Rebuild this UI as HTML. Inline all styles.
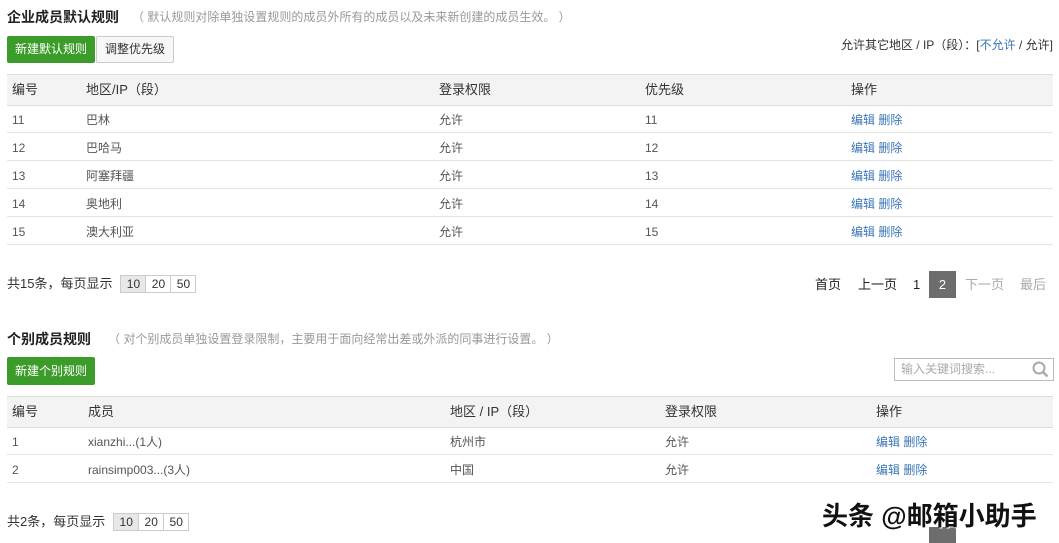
<!DOCTYPE html><html><head><meta charset="utf-8"><style>
body{margin:0;width:1059px;height:543px;overflow:hidden;background:#fff;font-family:"Liberation Sans","Noto Sans CJK SC",sans-serif;color:#333;position:relative}
.a{position:absolute;white-space:nowrap}
.t{font-size:14px;font-weight:bold;color:#222}
.d{font-size:12px;color:#999}
.btn{position:absolute;font-size:12px;line-height:26px;padding:0 8px;border-radius:2px}
.g{background:#3c9c2a;color:#fff}
.w{background:#f7f7f7;border:1px solid #ccc;color:#333;line-height:25px}
.tbl{position:absolute;left:7px;width:1046px}
.h{position:absolute;left:0;width:1046px;background:#f3f3f3;border-top:1px solid #ddd;border-bottom:1px solid #ddd;font-size:13px;color:#333}
.r{position:absolute;left:0;width:1046px;border-bottom:1px solid #e4e4e4;font-size:12px;color:#555}
.c{position:absolute;top:2px}
.h .c{top:0}
.lk{color:#3a76b6}
.pg{font-size:13px;line-height:27px}
.ps{margin-left:8px}
.ps span{display:inline-block;border:1px solid #ccc;padding:0 4px;width:16px;text-align:center;font-size:12px;line-height:16px;margin-right:-1px;background:#fff}
</style></head><body>
<div class="a t" style="left:7px;top:7px">企业成员默认规则</div>
<div class="a d" style="left:132px;top:8px">（ 默认规则对除单独设置规则的成员外所有的成员以及未来新创建的成员生效。 ）</div>
<div class="btn g" style="left:7px;top:36px;height:27px;line-height:27px">新建默认规则</div>
<div class="btn w" style="left:96px;top:36px">调整优先级</div>
<div class="a" style="right:6px;top:36px;font-size:12px;color:#333">允许其它地区 / IP（段）：[<span class="lk">不允许</span> / 允许]</div>

<div class="h" style="left:7px;top:74px;height:30px">
<span class="c" style="left:5px;line-height:30px">编号</span><span class="c" style="left:79px;line-height:30px">地区/IP（段）</span><span class="c" style="left:432px;line-height:30px">登录权限</span><span class="c" style="left:638px;line-height:30px">优先级</span><span class="c" style="left:844px;line-height:30px">操作</span></div>
<div class="tbl" style="top:105px">
<div class="r" style="top:0;height:27px;line-height:27px"><span class="c" style="left:5px">11</span><span class="c" style="left:79px">巴林</span><span class="c" style="left:432px">允许</span><span class="c" style="left:638px">11</span><span class="c lk" style="left:844px">编辑 删除</span></div>
<div class="r" style="top:28px;height:27px;line-height:27px"><span class="c" style="left:5px">12</span><span class="c" style="left:79px">巴哈马</span><span class="c" style="left:432px">允许</span><span class="c" style="left:638px">12</span><span class="c lk" style="left:844px">编辑 删除</span></div>
<div class="r" style="top:56px;height:27px;line-height:27px"><span class="c" style="left:5px">13</span><span class="c" style="left:79px">阿塞拜疆</span><span class="c" style="left:432px">允许</span><span class="c" style="left:638px">13</span><span class="c lk" style="left:844px">编辑 删除</span></div>
<div class="r" style="top:84px;height:27px;line-height:27px"><span class="c" style="left:5px">14</span><span class="c" style="left:79px">奥地利</span><span class="c" style="left:432px">允许</span><span class="c" style="left:638px">14</span><span class="c lk" style="left:844px">编辑 删除</span></div>
<div class="r" style="top:112px;height:27px;line-height:27px"><span class="c" style="left:5px">15</span><span class="c" style="left:79px">澳大利亚</span><span class="c" style="left:432px">允许</span><span class="c" style="left:638px">15</span><span class="c lk" style="left:844px">编辑 删除</span></div>
</div>
<div class="a pg" style="left:7px;top:270px">共15条，每页显示<span class="ps"><span style="background:#e8e8e8">10</span><span>20</span><span>50</span></span></div>
<div class="a pg" style="left:815px;top:271px;color:#222">首页</div>
<div class="a pg" style="left:858px;top:271px;color:#222">上一页</div>
<div class="a pg" style="left:913px;top:271px;color:#222">1</div>
<div class="a pg" style="left:929px;top:271px;width:27px;height:27px;background:#6d6d6d;color:#fff;text-align:center">2</div>
<div class="a pg" style="left:965px;top:271px;color:#aaa">下一页</div>
<div class="a pg" style="left:1020px;top:271px;color:#aaa">最后</div>

<div class="a t" style="left:7px;top:329px">个别成员规则</div>
<div class="a d" style="left:108px;top:330px">（ 对个别成员单独设置登录限制，主要用于面向经常出差或外派的同事进行设置。 ）</div>
<div class="btn g" style="left:7px;top:357px;height:28px;line-height:28px">新建个别规则</div>
<div class="a" style="left:894px;top:358px;width:158px;height:21px;border:1px solid #bbb;font-size:12px;color:#aaa;line-height:21px"><span style="margin-left:6px">输入关键词搜索...</span>
<svg style="position:absolute;right:4px;top:2px" width="17" height="17" viewBox="0 0 17 17"><circle cx="7" cy="7" r="5.5" fill="none" stroke="#aaa" stroke-width="2"/><path d="M11 11l4.5 4.5" stroke="#aaa" stroke-width="2.4"/></svg></div>

<div class="h" style="left:7px;top:396px;height:30px">
<span class="c" style="left:5px;line-height:30px">编号</span><span class="c" style="left:81px;line-height:30px">成员</span><span class="c" style="left:443px;line-height:30px">地区 / IP（段）</span><span class="c" style="left:658px;line-height:30px">登录权限</span><span class="c" style="left:869px;line-height:30px">操作</span></div>
<div class="tbl" style="top:427px">
<div class="r" style="top:0;height:27px;line-height:27px"><span class="c" style="left:5px">1</span><span class="c" style="left:81px">xianzhi...(1人)</span><span class="c" style="left:443px">杭州市</span><span class="c" style="left:658px">允许</span><span class="c lk" style="left:869px">编辑 删除</span></div>
<div class="r" style="top:28px;height:27px;line-height:27px"><span class="c" style="left:5px">2</span><span class="c" style="left:81px">rainsimp003...(3人)</span><span class="c" style="left:443px">中国</span><span class="c" style="left:658px">允许</span><span class="c lk" style="left:869px">编辑 删除</span></div>
</div>
<div class="a pg" style="left:7px;top:508px">共2条，每页显示<span class="ps"><span style="background:#e8e8e8">10</span><span>20</span><span>50</span></span></div>
<div class="a" style="left:929px;top:527px;width:27px;height:16px;background:#6d6d6d"></div>
<div class="a" style="left:822px;top:496px;font-size:26px;font-weight:bold;color:#111;text-shadow:1px 1px 0 #fff,-1px -1px 0 #fff">头条 @邮箱小助手</div>
</body></html>
